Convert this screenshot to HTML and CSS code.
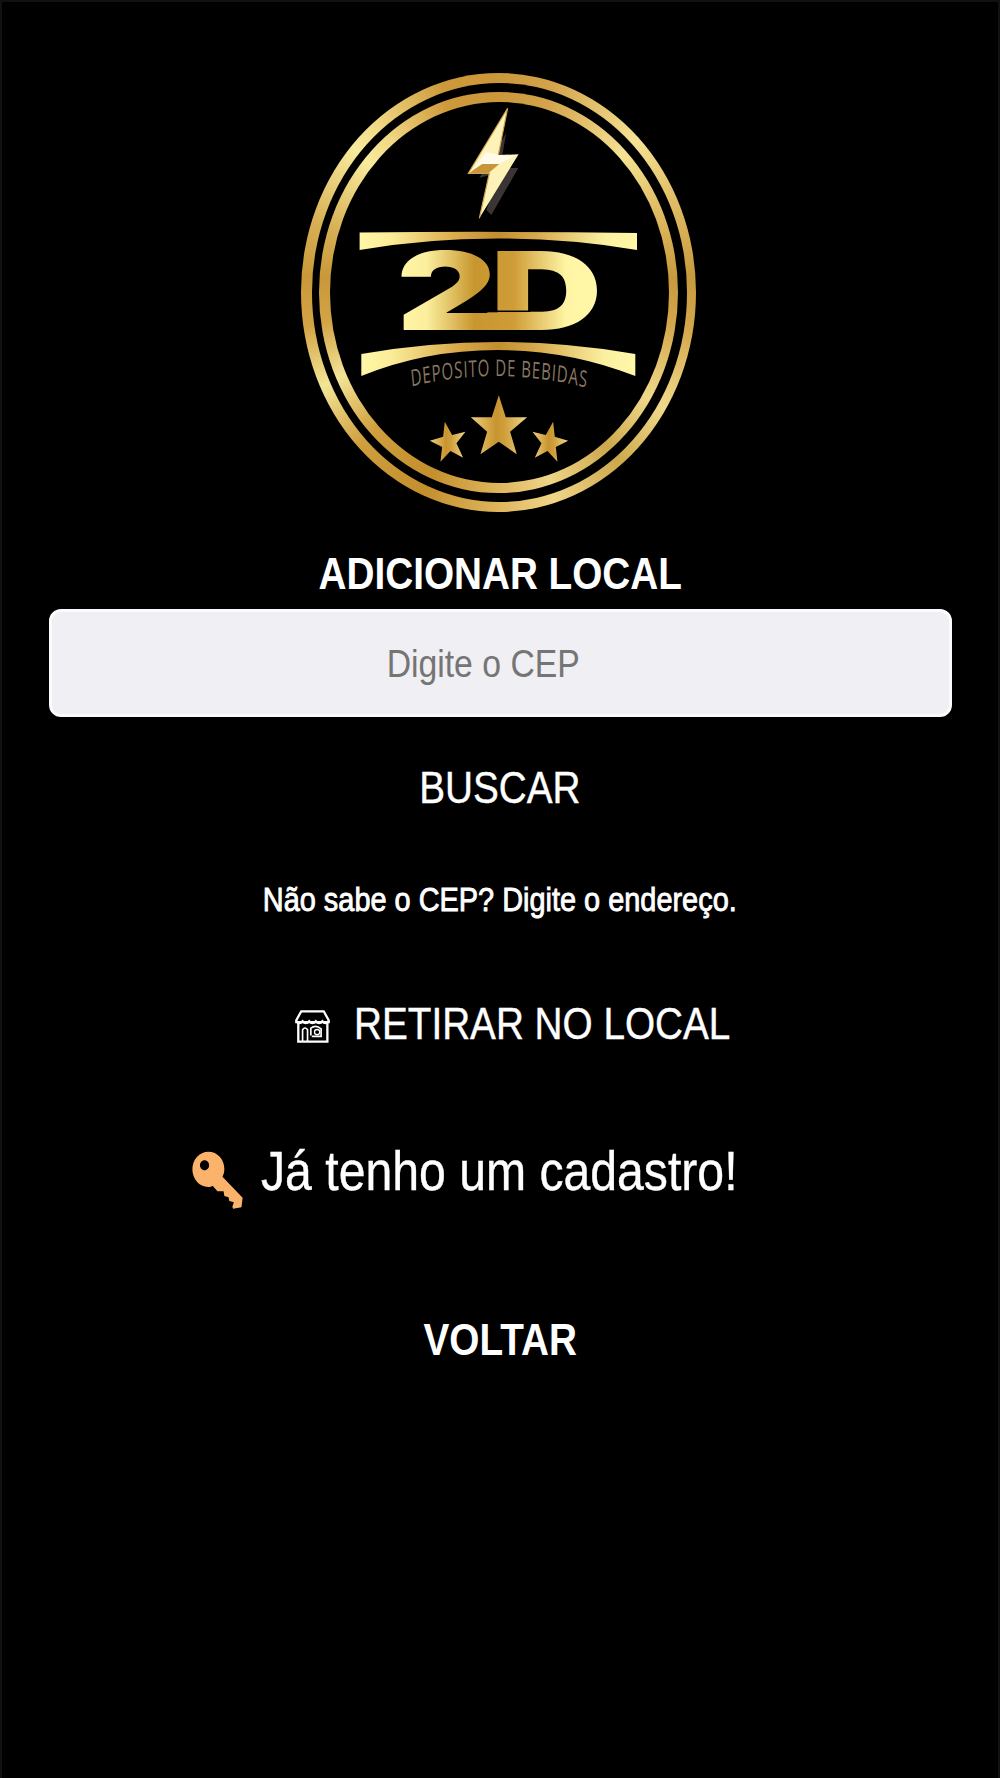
FILE: index.html
```html
<!DOCTYPE html>
<html lang="pt-BR">

<head>
    <meta charset="UTF-8">
    <meta name="viewport" content="width=device-width, initial-scale=1.0">
    <link rel="stylesheet" href="styles.css">
    <title>Adicionar local</title>
</head>

<body>
    <main class="page">
        <!-- Logo -->
        <div class="ring ring-outer">
            <div class="gap">
                <div class="ring ring-inner">
                    <svg class="emblem" viewBox="40.7 42 338.6 380.7" preserveAspectRatio="none">
                        <defs>
                            <linearGradient id="gold" gradientUnits="userSpaceOnUse" x1="70" y1="0" x2="348" y2="0">
                                <stop offset="0" stop-color="#fff8a8" />
                                <stop offset=".12" stop-color="#fbeb97" />
                                <stop offset=".36" stop-color="#d8a748" />
                                <stop offset=".5" stop-color="#c28f2f" />
                                <stop offset=".64" stop-color="#d8aa4e" />
                                <stop offset=".88" stop-color="#fbf0a0" />
                                <stop offset="1" stop-color="#fff8a8" />
                            </linearGradient>
                            <linearGradient id="goldText" gradientUnits="userSpaceOnUse" x1="110" y1="0" x2="308" y2="0">
                                <stop offset="0" stop-color="#fff6a6" />
                                <stop offset=".14" stop-color="#fbee9c" />
                                <stop offset=".38" stop-color="#c8962f" />
                                <stop offset=".58" stop-color="#cf9d38" />
                                <stop offset=".84" stop-color="#fff4a4" />
                                <stop offset="1" stop-color="#fff8a8" />
                            </linearGradient>
                            <linearGradient id="goldStar" x1="0" y1="0" x2="1" y2="0">
                                <stop offset="0" stop-color="#ecd07c" />
                                <stop offset=".45" stop-color="#c8942f" />
                                <stop offset=".6" stop-color="#cf9f3c" />
                                <stop offset="1" stop-color="#efd88a" />
                            </linearGradient>
                            <path id="arc" d="M188 326.500Q322 305 458 328" />
                        </defs>

                        <!-- bolt -->
                        <path fill="#3a3434" d="M217 73L213 95L206 108L229 108L202 155L197 150L211 112L190 118Z" />
                        <path fill="#fdf3b8" d="M218.300 48.300L209 95L229.300 94.300L190 158.300L200 113.300L179 113.300Z" />
                        <path fill="#c8953a" d="M184 110L193 104H210L199 113.300H180Z" />
                        <path fill="#fffbea" d="M197 92L209 95L226 96L209 104H192L182 111Z" />
                        <path fill="none" stroke="#d1a150" stroke-width="1.200" d="M218.300 48.300L179 113.300H200L190 158.300M218.300 48.300L209 95" />

                        <!-- bars -->
                        <path fill="url(#gold)" d="M70.300 172.500Q208 171 347.700 173V190Q280 178.500 208 178.500Q136 178.500 70.300 190Z" />
                        <path fill="url(#gold)" d="M72 294Q208 270 346 294V316Q280 290 208 290Q136 290 72 316Z" />

                        <text class="brand" x="107" y="270" textLength="101" lengthAdjust="spacingAndGlyphs">2</text>
                        <text class="brand" x="201" y="270" textLength="112" lengthAdjust="spacingAndGlyphs">D</text>
                        <rect fill="url(#goldText)" x="198" y="252.300" width="20" height="17.700" />
                        <rect x="207" y="250.500" width="34" height="1.500" />

                        <g transform="scale(.65 1)">
                            <text class="slogan"><textPath href="#arc" textLength="270">DEPOSITO DE BEBIDAS</textPath></text>
                        </g>

                        <!-- stars -->
                        <g fill="url(#goldStar)" transform="translate(0.500 230) scale(.3333)">
                            <path d="M627 316L648 382H712L661 425L681 493L627 455L572 493L592 425L543 382H606Z" />
                            <path d="M465 395L487 435L527 425L500 460L520 503L482 483L452 515L457 471L420 452L460 440Z" />
                            <path d="M790 395L768 435L728 425L755 460L735 503L773 483L803 515L798 471L835 452L795 440Z" />
                        </g>
                    </svg>
                </div>
            </div>
        </div>

        <!-- CEP form -->
        <h1 class="title"><span class="narrow">ADICIONAR LOCAL</span></h1>
        <div class="field">
            <input type="text" class="cep-input" placeholder="Digite o CEP">
        </div>
        <button class="search-button"><span class="narrow">BUSCAR</span></button>
        <a class="address-link"><span class="narrow">Não sabe o CEP? Digite o endereço.</span></a>

        <!-- Other options -->
        <a class="pickup">
            <svg class="store-icon" viewBox="72 86 112 104" fill="none" stroke="#fff" stroke-width="7">
                <path d="M94 92H162L177 119V125H79V119Z" />
                <path d="M79 122Q88 134 98 122Q108 134 118 122Q128 134 138 122Q148 134 158 122Q168 134 177 122" />
                <path d="M85 126V184H173V126" />
                <path stroke-width="5" d="M98 184V148Q105 137 113 148V184M123 165V143Q138 131 154 145V168H126" />
                <circle stroke-width="4" cx="142" cy="155" r="8" />
            </svg>
            <span class="narrow">RETIRAR NO LOCAL</span>
        </a>
        <a class="login">
            <svg class="key-icon" viewBox="57 93 134 174" preserveAspectRatio="none">
                <path fill="#fbb36b" fill-rule="evenodd" d="M100 95C124 95 142 118 142 147C142 156 140 164 137 170L190 233L187 262L165 266L163 260L167 247L155 243L153 232L142 228L140 214L124 214L111 197C107 200 104 201 100 201C76 201 58 177 58 148C58 119 76 95 100 95ZM90 121C83 121 78 128 78 136C78 144 83 151 90 151C97 151 102 144 102 136C102 128 97 121 90 121Z" />
            </svg>
            <span class="narrow">Já tenho um cadastro!</span>
        </a>
        <a class="back"><span class="narrow">VOLTAR</span></a>
    </main>
</body>

</html>
```
FILE: styles.css
```css
* {
    box-sizing: border-box;
}

body {
    margin: 0;
    background-color: #000;
    color: #fff;
    font-family: "Liberation Sans", Arial, sans-serif;
}

.page {
    display: flex;
    flex-direction: column;
    align-items: center;
    height: 1778px;
    padding-top: 70.700px;
    border: 2px solid #111;
    border-bottom: none;
    overflow: hidden;
}

/* Logo */
.ring {
    border-radius: 50%;
    background: conic-gradient(#cb973b 0deg, #d3a24a 14deg, #f5e394 42deg, #e3c169 60deg, #c89a3e 85deg, #d3a64b 100deg, #f0d98a 125deg, #cda84c 145deg, #f0d588 165deg, #dcb257 182deg, #c48f2d 200deg, #cf9e3d 222deg, #f3e597 242deg, #d3a446 260deg, #c9983a 275deg, #d8b257 292deg, #f8eb9e 315deg, #f0d783 325deg, #cd993a 345deg, #cb973b 360deg);
}

.ring-outer {
    width: 395px;
    height: 439px;
    margin-right: 4px;
    padding: 10.600px 9px 10px 11.300px;
}

.gap {
    height: 100%;
    padding: 8.700px 9px 8.400px 7.700px;
    border-radius: 50%;
    background-color: #000;
}

.ring-inner {
    height: 100%;
    padding: 10px 8.400px 10.600px 11px;
}

.emblem {
    display: block;
    width: 100%;
    height: 100%;
    border-radius: 50%;
    background-color: #000;
}

.brand {
    font-family: Inter, sans-serif;
    font-size: 108px;
    font-weight: 900;
    fill: url(#goldText);
}

.slogan {
    font-family: "Open Sans", sans-serif;
    font-size: 23px;
    fill: #8b7862;
}

/* Texts are condensed to 86% of their width */
.narrow {
    display: inline-block;
    transform: scaleX(0.86);
    white-space: nowrap;
}

.title {
    margin: 32.500px 0 4.500px;
    font-size: 45px;
    line-height: 60px;
}

.field {
    width: 903px;
    height: 108px;
    border: 3px solid #fbfbfd;
    border-radius: 12px;
    background-color: #f0eff3;
    overflow: hidden;
}

.cep-input {
    width: 100%;
    height: 100%;
    padding: 2px 40px 0 0;
    border: none;
    outline: none;
    background: none;
    color: #333;
    font-family: inherit;
    font-size: 39px;
    text-align: center;
    transform: scaleX(0.865);
}

.cep-input::placeholder {
    color: #757575;
}

.search-button {
    margin-top: 41px;
    padding: 0;
    border: none;
    background: none;
    color: #fff;
    font-family: inherit;
    font-size: 45px;
    line-height: 60px;
    cursor: pointer;
    -webkit-text-stroke: 0.400px #fff;
}

.address-link {
    margin-top: 51px;
    font-size: 34px;
    line-height: 60px;
    -webkit-text-stroke: 0.900px #fff;
}

.address-link .narrow {
    transform: scaleX(0.85);
}

.pickup,
.login {
    display: flex;
    align-items: center;
    align-self: flex-start;
    height: 60px;
    line-height: 60px;
    -webkit-text-stroke: 0.400px #fff;
}

.pickup .narrow,
.login .narrow {
    transform-origin: left center;
}

.pickup {
    margin-top: 65.500px;
    padding-left: 292px;
    gap: 22.500px;
    font-size: 45px;
}

.store-icon {
    width: 37px;
    height: 35px;
    margin-top: 4px;
}

.login {
    margin-top: 86.500px;
    padding-left: 190px;
    gap: 17.500px;
    font-size: 56px;
}

.key-icon {
    width: 51px;
    height: 58px;
    margin-top: 18px;
}

.back {
    margin-top: 109px;
    font-size: 45px;
    font-weight: bold;
    line-height: 60px;
}
```
